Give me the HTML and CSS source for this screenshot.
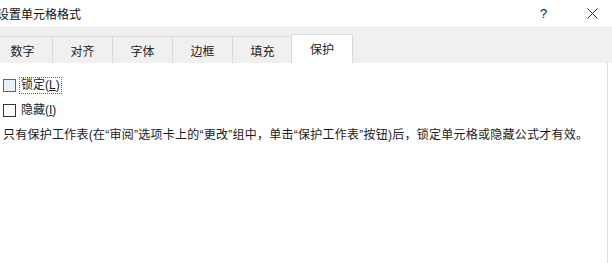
FILE: index.html
```html
<!DOCTYPE html>
<html lang="zh-CN">
<head>
<meta charset="utf-8">
<title>设置单元格格式</title>
<link rel="stylesheet" href="styles.css">
</head>
<body>
<div class="dialog">
  <div class="titlebar">
    <span class="title">设置单元格格式</span>
    <span class="help">?</span>
    <span class="close"><svg width="11" height="11" viewBox="0 0 11 11"><path d="M0.5 0.5 L10.5 10.5 M10.5 0.5 L0.5 10.5" stroke="#333" stroke-width="1" fill="none"/></svg></span>
  </div>
  <div class="tabstrip">
    <div class="tab">数字</div>
    <div class="tab">对齐</div>
    <div class="tab">字体</div>
    <div class="tab">边框</div>
    <div class="tab">填充</div>
    <div class="tab active">保护</div>
  </div>
  <div class="panel">
    <div class="option">
      <span class="box hover"></span>
      <span class="label focus">锁定(<u>L</u>)</span>
    </div>
    <div class="option">
      <span class="box"></span>
      <span class="label">隐藏(<u>I</u>)</span>
    </div>
    <p class="note">只有保护工作表(在“审阅”选项卡上的“更改”组中，单击“保护工作表”按钮)后，锁定单元格或隐藏公式才有效。</p>
  </div>
</div>
</body>
</html>
```
FILE: styles.css
```css
html, body {
  margin: 0;
  padding: 0;
  background: #ffffff;
}
body {
  width: 612px;
  height: 263px;
  overflow: hidden;
  font-family: "Liberation Sans", "Noto Sans CJK SC", sans-serif;
  font-size: 12px;
  color: #1a1a1a;
}
.dialog {
  display: flex;
  flex-direction: column;
  height: 263px;
}
.titlebar {
  height: 27px;
  display: flex;
  align-items: center;
  background: #ffffff;
}
.title {
  margin-left: -3px;
  font-size: 12px;
  color: #111;
  flex: 1;
}
.help {
  width: 10px;
  font-size: 13px;
  color: #222;
  margin-right: 37px;
}
.close {
  display: flex;
  margin-right: 14px;
}
.tabstrip {
  height: 36px;
  background: #f0f0f0;
  display: flex;
  align-items: flex-end;
  margin-left: -8px;
  border-top: 1px solid #e6e6e6;
  box-sizing: border-box;
}
.tab {
  width: 60px;
  height: 27px;
  border: 1px solid #dadada;
  border-bottom: none;
  border-right: none;
  background: #f0f0f0;
  display: flex;
  align-items: center;
  justify-content: center;
  color: #222;
  padding-top: 1px;
  box-sizing: border-box;
}
.tab.active {
  width: 62px;
  height: 29px;
  background: #ffffff;
  border-right: 1px solid #dadada;
  margin-left: -1px;
  padding-top: 0;
  padding-bottom: 1px;
}
.panel {
  flex: 1;
  background: #ffffff;
  width: 608px;
  border-right: 1px solid #dcdcdc;
  padding: 14px 0 0 3px;
  box-sizing: border-box;
}
.option {
  display: flex;
  align-items: center;
  height: 17px;
  margin-bottom: 8px;
}
.box {
  width: 13px;
  height: 13px;
  border: 1px solid #333;
  box-sizing: border-box;
  background: #fff;
  margin-right: 3px;
}
.box.hover {
  background: #e8f2fb;
  border-color: #4a6a8a;
}
.label {
  padding: 0 1px;
  line-height: 15px;
  border: 1px dotted transparent;
  color: #222;
}
.label.focus {
  border-color: #666;
}
.note {
  margin: 0;
  line-height: 16px;
  letter-spacing: 0.25px;
  color: #1a1a1a;
  white-space: nowrap;
}
```
